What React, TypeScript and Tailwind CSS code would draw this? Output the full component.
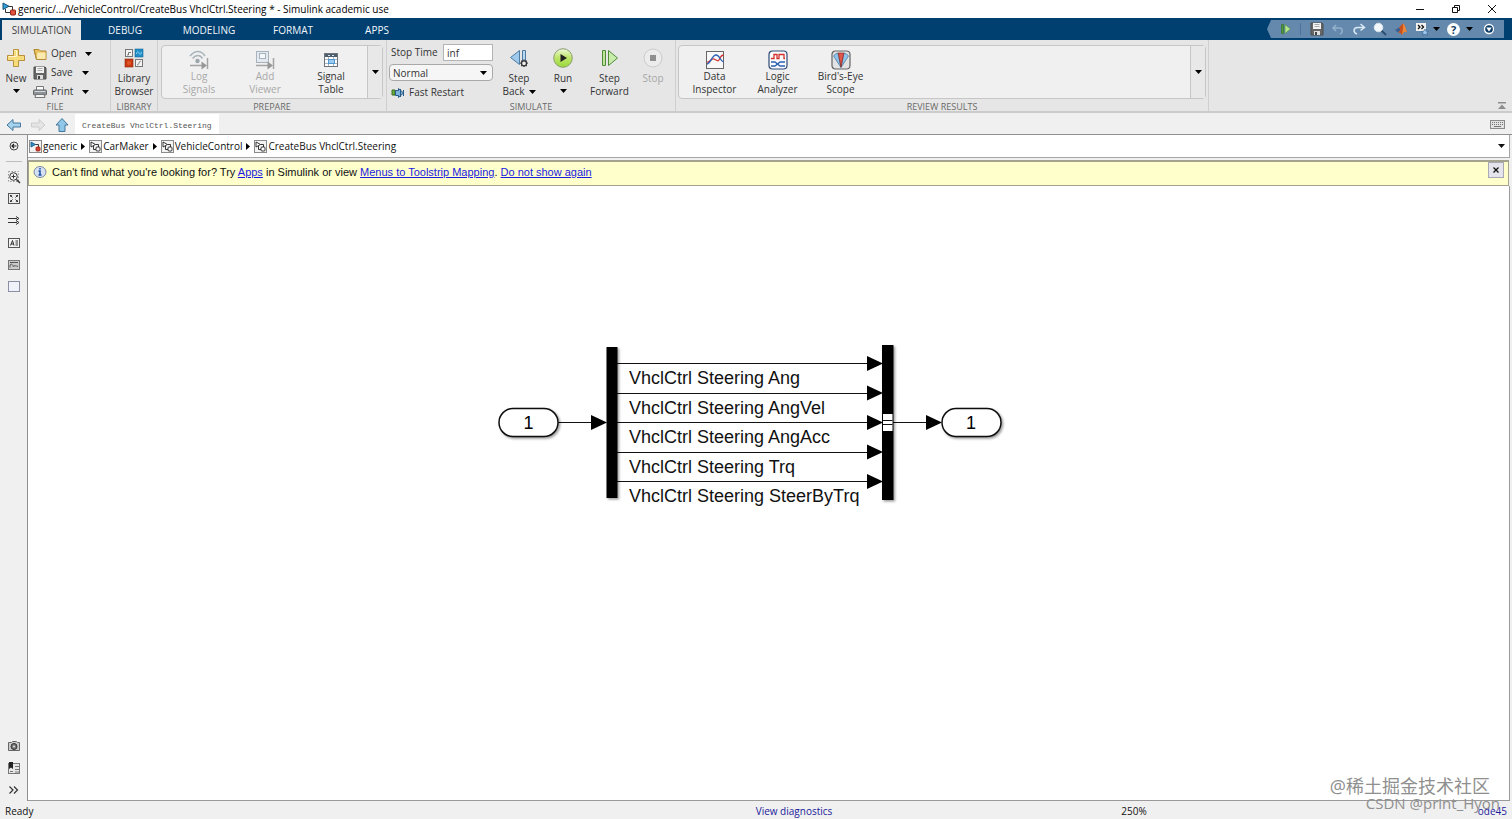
import type { ReactNode } from "react";

function Caret({ className = "" }: { className?: string }) {
  return (
    <svg viewBox="0 0 7 4" className={`h-[4px] w-[7px] shrink-0 ${className}`} fill="currentColor" aria-hidden>
      <path d="M0 0h7L3.5 4z" />
    </svg>
  );
}

function Icon({ size = 20, children }: { size?: number; children: ReactNode }) {
  return (
    <svg width={size} height={size} viewBox={`0 0 ${size} ${size}`} fill="none" className="shrink-0" aria-hidden>
      {children}
    </svg>
  );
}

/* ---------- toolstrip icons ---------- */

const NewIcon = () => (
  <Icon>
    <path d="M7.5 1.5h5v6h6v5h-6v6h-5v-6h-6v-5h6z" fill="#f6dc7a" stroke="#b8913a" />
    <path d="M8.5 2.5h2v6h-6M2.5 8.5h5" stroke="#fff6cf" />
  </Icon>
);

const OpenIcon = () => (
  <Icon size={14}>
    <path d="M1 2.5h5l1.5 1.5H13v8.5H3.5z" fill="#e9c15c" stroke="#b38a35" />
    <path d="M4.5 5.5h8v6.5h-9z" fill="#fbeab0" />
    <path d="M1 2.5l2.5 10" stroke="#b38a35" />
  </Icon>
);

const SaveIcon = () => (
  <Icon size={14}>
    <path d="M1 1h11l1 1v11H1z" fill="#666" stroke="#4c4c4c" />
    <rect x="3" y="1" width="8" height="6" fill="#f2f2f2" />
    <path d="M4.5 2.5h5M4.5 4.5h5" stroke="#aaa" />
    <rect x="4" y="9" width="6" height="4" fill="#ddd" />
    <rect x="5" y="10" width="2" height="3" fill="#444" />
  </Icon>
);

const PrintIcon = () => (
  <Icon size={14}>
    <path d="M3.5 5V1.5h7V5" fill="#fff" stroke="#777" />
    <rect x=".5" y="5" width="13" height="5" rx="1" fill="#8d9299" stroke="#666" />
    <path d="M1.5 6.5h11" stroke="#d5d8dc" />
    <path d="M3 9.5h8l1 3H2z" fill="#f3f3f3" stroke="#777" />
  </Icon>
);

const LibraryIcon = () => (
  <Icon>
    <rect x="1.5" y="1.5" width="7" height="7" fill="#f4f4f4" stroke="#777" />
    <path d="M3 7h1.5V4.5H7" stroke="#777" />
    <rect x="11" y="1" width="8" height="8" fill="#1f8fc9" stroke="#1a6a98" strokeWidth=".6" />
    <path d="M12.5 6c1-4 2-2 2.5-1s1.5 3 2.5-1" stroke="#8fd4f5" />
    <rect x="1" y="11" width="8" height="8" fill="#c93a12" stroke="#8d260a" strokeWidth=".6" />
    <circle cx="5" cy="15" r="2" fill="#e0562a" />
    <rect x="11.5" y="11.5" width="7" height="7" fill="#f4f4f4" stroke="#777" />
    <path d="M13 17c3 0 1-4 4-4" stroke="#888" />
  </Icon>
);

const LogSignalsIcon = () => (
  <Icon>
    <path d="M1 6c5-6 11-6 15 0M3.5 8.5c3.5-4 7.5-4 10 0" stroke="#a9b4bb" strokeWidth="1.5" />
    <circle cx="8.5" cy="11" r="2.2" fill="#9aa5ac" />
    <path d="M1 15.5h12M18.5 8v11" stroke="#a3a3a3" strokeWidth="1.5" />
    <path d="M12.5 11.5l5.5 4-5.5 4z" fill="#979797" />
  </Icon>
);

const AddViewerIcon = () => (
  <Icon>
    <rect x="1.5" y="1.5" width="12" height="11" fill="#e3e9ee" stroke="#a6b3bd" />
    <rect x="4.5" y="3.5" width="6" height="5" fill="#f4f8fb" stroke="#a6b3bd" />
    <path d="M1 15.5h12M18.5 8v11" stroke="#a3a3a3" strokeWidth="1.5" />
    <path d="M12.5 11.5l5.5 4-5.5 4z" fill="#979797" />
  </Icon>
);

const SignalTableIcon = () => (
  <Icon size={16}>
    <rect x="1.5" y="1.5" width="13" height="13" fill="#fff" stroke="#6d747b" />
    <rect x="2" y="2" width="12" height="3" fill="#4d5d6c" />
    <path d="M5 3.5h2M9 3.5h2" stroke="#dde5ec" />
    <path d="M2 7.5h12M2 11.5h12M5.5 5v9M10.5 5v9" stroke="#a5b3c0" />
    <rect x="5.5" y="7.5" width="6" height="4" fill="#9ccdf0" stroke="#4f95cf" />
  </Icon>
);

const FastRestartIcon = () => (
  <Icon size={14}>
    <path d="M1 4h3v5H1z" fill="#6fae3c" stroke="#3b6d20" />
    <path d="M4.5 4.5h3V2.5l5 4.5-5 4.5V9.5h-3z" fill="#7db3dc" stroke="#275a86" />
    <path d="M9.5 3v8M12.5 4v6" stroke="#275a86" />
  </Icon>
);

const StepBackIcon = () => (
  <Icon>
    <path d="M10.5 2.5v14L1.5 9.5z" fill="#9fc9ea" stroke="#4d7ba3" />
    <path d="M13.5 2.5h3v12h-3z" fill="#b9d9f1" stroke="#4d7ba3" />
    <path d="M15 11.5V19M11.2 15.2h7.6M12.3 12.6l5.4 5.4M12.3 18l5.4-5.4" stroke="#333" strokeWidth="1.3" />
    <circle cx="15" cy="15.3" r="2.5" fill="#eee" stroke="#333" strokeWidth="1.3" />
  </Icon>
);

const RunIcon = () => (
  <Icon>
    <defs>
      <linearGradient id="run-fill" x1="0" y1="0" x2="0" y2="1">
        <stop offset="0" stopColor="#f0f9dc" />
        <stop offset=".45" stopColor="#bfe66e" />
        <stop offset="1" stopColor="#9bd93a" />
      </linearGradient>
    </defs>
    <circle cx="10" cy="10" r="9.3" fill="url(#run-fill)" stroke="#8c9c74" />
    <path d="M7.5 6l6.5 4-6.5 4z" fill="#222" />
  </Icon>
);

const StepForwardIcon = () => (
  <Icon>
    <path d="M2.5 2.5h3v15h-3z" fill="#bfe39a" stroke="#4e8c3a" />
    <path d="M8.5 2.5v15L17.5 10z" fill="#c8ecaa" stroke="#4e8c3a" />
  </Icon>
);

const StopIcon = () => (
  <Icon>
    <circle cx="10" cy="10" r="9" fill="#ececec" stroke="#cbcbcb" />
    <rect x="7" y="7" width="6" height="6" fill="#8f8f8f" />
  </Icon>
);

const DataInspectorIcon = () => (
  <Icon>
    <rect x="1.5" y="1.5" width="17" height="17" fill="#f8f8f8" stroke="#666" />
    <path d="M2 12c3 1 4-4 7-3s4 4 6-1c1-2 2-3 3.5-3" stroke="#d2322d" strokeWidth="1.3" />
    <path d="M2 14c4-1 5-9 9-9 4 0 4 6 7.5 7" stroke="#2d62b5" strokeWidth="1.3" />
  </Icon>
);

const LogicAnalyzerIcon = () => (
  <Icon>
    <rect x="1" y="1" width="18" height="18" rx="3.5" fill="#fbfbfd" stroke="#2f4a78" strokeWidth="1.2" />
    <path d="M3 8.5h3v-4h3v4h2v-4h5v4h1" stroke="#d2322d" strokeWidth="1.3" />
    <path d="M3 12h4l5 4h5M3 16h4l5-4h5" stroke="#2d62b5" strokeWidth="1.3" />
  </Icon>
);

const BirdsEyeIcon = () => (
  <Icon>
    <rect x="1" y="1" width="18" height="18" rx="3.5" fill="#e3e3e3" stroke="#666" strokeWidth="1.2" />
    <path d="M10 17.5L2.5 6Q4 3.5 7 3z" fill="#8fc3e8" stroke="#3f719c" strokeWidth=".7" />
    <path d="M10 17.5L17.5 6Q16 3.5 13 3z" fill="#8fc3e8" stroke="#3f719c" strokeWidth=".7" />
    <path d="M10 17L7.2 3h5.6z" fill="#e2574c" stroke="#8c241d" strokeWidth=".7" />
  </Icon>
);

/* ---------- quick access icons ---------- */

const QuickStepIcon = () => (
  <Icon size={14}>
    <path d="M2.5 2.5h2v9h-2z" fill="#4f9b38" stroke="#2f6a25" strokeWidth=".6" />
    <path d="M6 2.5l5.5 4.5L6 11.5z" fill="#b4e690" stroke="#4e8c3a" strokeWidth=".6" />
  </Icon>
);

const UndoIcon = () => (
  <Icon size={14}>
    <path d="M5 3L2 6l3 3M2.5 6h6c3.5 0 3.5 5 .5 6" stroke="#93b1cc" strokeWidth="1.5" />
  </Icon>
);

const RedoIcon = () => (
  <Icon size={14}>
    <path d="M8.5 2l4 3.5-4 3M12 5.5H5.5C1 5.5 1 11 5 12" stroke="#dbe9f5" strokeWidth="1.5" />
  </Icon>
);

const SearchIcon = () => (
  <Icon size={14}>
    <path d="M8.5 8.5l4.5 4.5" stroke="#2e5070" strokeWidth="2" />
    <circle cx="5.5" cy="5.5" r="4.3" fill="#f2f7fb" stroke="#d9e3ec" />
  </Icon>
);

const MatlabIcon = () => (
  <Icon size={14}>
    <path d="M1 8l4-2.500 2 2L4 10.500z" fill="#3d5f92" />
    <path d="M5 5.500C7 4 8 1.500 9 1.500c1.500 0 3 6 4 9-2-1.500-3-.5-5 2.500-.8-1.500-2-2.500-4-2.500 2-1 3-3 1-5z" fill="#c8501f" />
    <path d="M9 1.500c.5 3-.5 8-1 11.500 2-3 3-4 5-2.500-1-3-2.500-9-4-9z" fill="#ec8a3c" />
  </Icon>
);

const ShortcutsIcon = () => (
  <Icon size={14}>
    <path d="M1 1h10v8H1z" fill="#f2f2f2" />
    <path d="M3 3l2 2-2 2M6.5 3l2 2-2 2" stroke="#111" strokeWidth="1.3" />
    <path d="M10 7l1.2 2.2 2.3.2-1.700 1.600.5 2.500-2.300-1.200L7.700 13.500l.5-2.500L6.500 9.400l2.300-.2z" fill="#9cc6ea" stroke="#2e5a8a" strokeWidth=".6" />
  </Icon>
);

const HelpIcon = () => (
  <span className="flex size-[13px] items-center justify-center rounded-full bg-white text-[11px] leading-none font-bold text-[#123a63]">
    ?
  </span>
);

const CollapseIcon = () => (
  <Icon size={12}>
    <circle cx="6" cy="6" r="4.5" fill="#0b3a66" stroke="#fff" strokeWidth="1.3" />
    <path d="M3.2 4.5h5.600L6 8.500z" fill="#fff" />
  </Icon>
);

/* ---------- model icons ---------- */

function ModelIcon({ root = false }: { root?: boolean }) {
  return (
    <Icon size={13}>
      <rect x=".5" y=".5" width="12" height="12" fill="#f3f3f3" stroke="#8a8a8a" />
      <path d="M2 2l4.5 2.5L2 7z" fill={root ? "#2b8fc7" : "#fff"} stroke={root ? "#1c5f88" : "#222"} strokeWidth=".9" />
      <path d="M6.5 4.5h3V7" stroke="#222" strokeWidth=".9" />
      <rect x="7" y="7" width="4" height="4" rx="1" fill={root ? "#d8412f" : "#fff"} stroke={root ? "#9c2518" : "#222"} strokeWidth=".9" />
      {!root && <path d="M7 9.5H4.5V6" stroke="#222" strokeWidth=".9" />}
    </Icon>
  );
}

const AppIcon = () => (
  <Icon size={14}>
    <path d="M1 1l6 3.2L1 7.5z" fill="#2fa3d8" stroke="#174f77" />
    <path d="M7 4.5h3.5V8M3.5 7v3.5H8" stroke="#333" />
    <rect x="8.5" y="8" width="5" height="5" rx="1" fill="#e2533b" stroke="#8f2417" />
  </Icon>
);

/* ---------- building blocks ---------- */

function Section({ label, width, children }: { label: string; width: string; children: ReactNode }) {
  return (
    <section className={`flex shrink-0 flex-col border-r border-[#cfcfcf] pt-1 ${width}`} aria-label={label}>
      <div className="flex h-[57px] w-full shrink-0">{children}</div>
      <div className="shrink-0 text-center text-[9px] leading-3 text-[#6a6a6a]">{label}</div>
    </section>
  );
}

type ToolProps = {
  icon: ReactNode;
  lines: string[];
  width: string;
  caret?: boolean;
  disabled?: boolean;
  compact?: boolean;
};

function Tool({ icon, lines, width, caret, disabled, compact }: ToolProps) {
  return (
    <button
      type="button"
      disabled={disabled}
      className={`flex shrink-0 flex-col items-center text-[10px] leading-[13px] text-[#333] disabled:text-[#a8a8a8] ${width}`}
    >
      <span className={compact ? "flex h-5 items-center" : "mb-[3px] flex h-[22px] items-center"}>{icon}</span>
      {lines.map((line, i) => (
        <span key={line} className="flex items-center gap-1 whitespace-nowrap">
          {line}
          {caret && lines.length > 1 && i === lines.length - 1 && <Caret className="text-black" />}
        </span>
      ))}
      {caret && lines.length === 1 && <Caret className="mt-1 text-black" />}
    </button>
  );
}

function FileRow({ icon, label, labelWidth = "w-[49px]" }: { icon: ReactNode; label: string; labelWidth?: string }) {
  return (
    <div className="flex h-[19px] items-center text-[10px] text-[#333]">
      <button type="button" className={`flex items-center gap-1 ${labelWidth}`}>
        {icon}
        {label}
      </button>
      <button type="button" aria-label={`${label} options`} className="text-black">
        <Caret />
      </button>
    </div>
  );
}

function Gallery({ width, children }: { width: string; children: ReactNode }) {
  return (
    <div className={`mt-px flex h-[54px] rounded-sm border border-[#c6c6c6] bg-[#f0f0f0] ${width}`}>
      <div className="flex flex-1 items-start pt-1 pl-1">{children}</div>
      <button
        type="button"
        aria-label="Show more"
        className="flex w-[15px] items-center justify-center border-l border-[#c6c6c6] bg-[#e8e8e8]"
      >
        <Caret />
      </button>
    </div>
  );
}

function TitleBar() {
  return (
    <header className="flex h-[18px] items-center bg-white pl-[2px] text-[10px] text-black">
      <AppIcon />
      <h1 className="ml-[2px] flex-1 whitespace-nowrap">
        generic/.../VehicleControl/CreateBus VhclCtrl.Steering * - Simulink academic use
      </h1>
      <button type="button" aria-label="Minimize" className="flex w-9 justify-center">
        <Icon size={10}><path d="M1 5.5h8" stroke="#111" /></Icon>
      </button>
      <button type="button" aria-label="Restore" className="flex w-9 justify-center">
        <Icon size={10}>
          <path d="M1.5 3.5h5v5h-5zM3.5 3V1.5h5v5H7" stroke="#111" />
        </Icon>
      </button>
      <button type="button" aria-label="Close" className="mr-[2px] flex w-9 justify-center">
        <Icon size={10}><path d="M1 1l8 8M9 1L1 9" stroke="#111" /></Icon>
      </button>
    </header>
  );
}

function QuickAccess() {
  const btn = "flex w-[21px] justify-center";
  return (
    <div className="mr-2 flex h-[18px] items-center">
      <svg viewBox="0 0 5 18" className="h-[18px] w-[5px]" aria-hidden>
        <path d="M5 0v18H4L0 9 4 0z" fill="#6489ad" />
      </svg>
      <div className="flex h-full items-center bg-[#6489ad] pr-[3px] text-black">
        <button type="button" aria-label="Step forward" className="flex w-7 justify-center"><QuickStepIcon /></button>
        <span className="mr-[5px] h-3 w-px bg-[#4b739b]" />
        <button type="button" aria-label="Save" className={btn}><SaveIcon /></button>
        <button type="button" aria-label="Undo" className={btn}><UndoIcon /></button>
        <button type="button" aria-label="Redo" className={btn}><RedoIcon /></button>
        <button type="button" aria-label="Search" className={btn}><SearchIcon /></button>
        <button type="button" aria-label="MATLAB" className={btn}><MatlabIcon /></button>
        <button type="button" aria-label="Shortcuts" className="flex w-8 items-center justify-center gap-1">
          <ShortcutsIcon />
          <Caret />
        </button>
        <button type="button" aria-label="Help" className="flex w-[34px] items-center justify-center gap-[6px]">
          <HelpIcon />
          <Caret />
        </button>
        <button type="button" aria-label="Customize" className="flex w-6 justify-center"><CollapseIcon /></button>
      </div>
    </div>
  );
}

function TabStrip() {
  return (
    <div className="flex h-[22px] items-end justify-between bg-[#004071] text-[10px]">
      <nav className="flex h-5 pl-[2px]">
        <button type="button" className="mr-[2px] w-[79px] bg-[#e8e8e8] text-[#444]">SIMULATION</button>
        {["DEBUG", "MODELING", "FORMAT", "APPS"].map((tab) => (
          <button key={tab} type="button" className="w-[84px] font-medium text-[#f2f6fa]">
            {tab}
          </button>
        ))}
      </nav>
      <div className="flex h-full items-center">
        <QuickAccess />
      </div>
    </div>
  );
}

function Toolstrip() {
  return (
    <div className="flex h-[73px] border-b-2 border-[#cbcbcb] bg-[#e6e6e6]">
      <Section label="FILE" width="w-[111px]">
        <Tool icon={<NewIcon />} lines={["New"]} width="w-8 pt-[3px]" caret />
        <div className="ml-px flex flex-col">
          <FileRow icon={<OpenIcon />} label="Open" labelWidth="w-[52px]" />
          <FileRow icon={<SaveIcon />} label="Save" />
          <FileRow icon={<PrintIcon />} label="Print" />
        </div>
      </Section>
      <Section label="LIBRARY" width="w-[47px]">
        <Tool icon={<LibraryIcon />} lines={["Library", "Browser"]} width="w-[46px] pt-[3px]" />
      </Section>
      <Section label="PREPARE" width="w-[229px]">
        <Gallery width="ml-[3px] w-[222px]">
          <Tool icon={<LogSignalsIcon />} lines={["Log", "Signals"]} width="w-[66px]" disabled compact />
          <Tool icon={<AddViewerIcon />} lines={["Add", "Viewer"]} width="w-[66px]" disabled compact />
          <Tool icon={<SignalTableIcon />} lines={["Signal", "Table"]} width="w-[66px]" compact />
        </Gallery>
      </Section>
      <Section label="SIMULATE" width="w-[289px]">
        <div className="ml-[2px] flex w-[104px] flex-col gap-[3px] text-[10px] text-[#333]">
          <div className="flex h-[17px] items-center justify-between">
            <label htmlFor="stop-time" className="pl-[2px] whitespace-nowrap">Stop Time</label>
            <input
              id="stop-time"
              defaultValue="inf"
              className="h-[17px] w-[50px] border border-[#b4b4b4] bg-white px-[3px]"
            />
          </div>
          <div className="relative flex">
            <select
              aria-label="Simulation mode"
              className="h-[17px] w-full appearance-none rounded-sm border border-[#a9a9a9] bg-[#f6f6f6] px-[3px] leading-3"
            >
              <option>Normal</option>
            </select>
            <Caret className="pointer-events-none absolute top-[7px] right-[6px] text-black" />
          </div>
          <button type="button" className="flex h-[17px] items-center gap-1 pl-[2px] whitespace-nowrap">
            <FastRestartIcon />
            Fast Restart
          </button>
        </div>
        <Tool icon={<StepBackIcon />} lines={["Step", "Back"]} width="ml-1 w-[44px] pt-[3px]" caret />
        <Tool icon={<RunIcon />} lines={["Run"]} width="w-[44px] pt-[3px]" caret />
        <Tool icon={<StepForwardIcon />} lines={["Step", "Forward"]} width="w-[49px] pt-[3px]" />
        <Tool icon={<StopIcon />} lines={["Stop"]} width="w-[38px] pt-[3px]" disabled />
      </Section>
      <Section label="REVIEW RESULTS" width="w-[533px]">
        <Gallery width="ml-[2px] w-[528px]">
          <Tool icon={<DataInspectorIcon />} lines={["Data", "Inspector"]} width="w-[63px]" compact />
          <Tool icon={<LogicAnalyzerIcon />} lines={["Logic", "Analyzer"]} width="w-[63px]" compact />
          <Tool icon={<BirdsEyeIcon />} lines={["Bird's-Eye", "Scope"]} width="w-[63px]" compact />
        </Gallery>
      </Section>
      <div className="flex flex-1 items-end justify-end pr-1">
        <button type="button" aria-label="Minimize toolstrip">
          <Icon size={12}>
            <path d="M2 3h8v1.500H2zM6 5.500l4 4.500H2z" fill="#8d8d8d" />
          </Icon>
        </button>
      </div>
    </div>
  );
}

function DocumentBar() {
  return (
    <div className="flex h-[22px] items-end border-b border-[#8f8f8f] bg-[#f0f0f0] pl-[6px]">
      <button type="button" aria-label="Back" className="mb-px">
        <Icon size={16}>
          <path d="M7 2.5v3.5h7.5v4H7v3.5L1 8z" fill="#a5d3ee" stroke="#45779c" />
        </Icon>
      </button>
      <button type="button" aria-label="Forward" className="mb-px ml-2" disabled>
        <Icon size={16}>
          <path d="M9 2.5v3.5H1.5v4H9v3.5L15 8z" fill="#e4e4e4" stroke="#cdcdcd" />
        </Icon>
      </button>
      <button type="button" aria-label="Up to parent" className="mb-px ml-2">
        <Icon size={16}>
          <path d="M2 8l6-6.500L14 8h-3v6.500H5V8z" fill="#90c6e8" stroke="#45779c" />
        </Icon>
      </button>
      <button type="button" className="ml-[5px] h-5 bg-white px-[7px] pt-1 font-['Liberation_Mono','Noto_Sans_CJK_SC',monospace] text-[8px] text-[#555]">
        CreateBus VhclCtrl.Steering
      </button>
      <button type="button" aria-label="Keyboard shortcuts" className="mr-[7px] mb-[5px] ml-auto">
        <svg width="15" height="9" viewBox="0 0 15 9" fill="none" aria-hidden>
          <rect x=".5" y=".5" width="14" height="8" fill="#e2e2e2" stroke="#8b8b8b" />
          <path d="M2 2.5h11M2 4.5h11" stroke="#777" strokeDasharray="1 1" />
          <path d="M4 6.5h7" stroke="#777" />
        </svg>
      </button>
    </div>
  );
}

const railTop: { name: string; art: ReactNode }[] = [
  {
    name: "Zoom",
    art: (
      <>
        <rect x="1.5" y="1.5" width="10" height="10" stroke="#999" strokeDasharray="1.5 1.5" />
        <circle cx="6.5" cy="6.5" r="3.8" fill="#f4f4f4" stroke="#333" />
        <path d="M4.5 6.5h4M6.5 4.5v4" stroke="#333" />
        <path d="M9.5 9.5l3.5 3.5" stroke="#333" strokeWidth="1.5" />
      </>
    ),
  },
  {
    name: "Fit to view",
    art: (
      <>
        <rect x="1.5" y="1.5" width="11" height="10" fill="#eee" stroke="#555" />
        <path d="M3 5V3h2.5zM11 5V3H8.5zM3 8v2h2.5zM11 8v2H8.5z" fill="#333" />
        <path d="M3 3l2.5 2.5M11 3L8.5 5.5M3 10l2.5-2.5M11 10L8.5 7.5" stroke="#333" />
      </>
    ),
  },
  {
    name: "Sample time",
    art: <path d="M1 4.5h9M1 8.5h9M9 2.5l3 2-3 2M9 6.5l3 2-3 2" stroke="#333" />,
  },
  {
    name: "Annotation",
    art: (
      <>
        <rect x="1.5" y="2.5" width="11" height="9" fill="#f4f4f4" stroke="#555" />
        <path d="M3.5 9.5L5.5 4.5 7 9.5M4 8h3M8.5 5h2.5M8.5 7h2.5M8.5 9h2.5" stroke="#333" />
      </>
    ),
  },
  {
    name: "Image",
    art: (
      <>
        <rect x="1.5" y="2.5" width="11" height="9" fill="#ccc" stroke="#777" />
        <path d="M3 9.5V7c1.5-2 3 0 3 1.5 1-1 3-1 5 0M3 4.5h8" stroke="#555" />
      </>
    ),
  },
  { name: "Area", art: <rect x="1.5" y="1.5" width="11" height="10" fill="#eff1fb" stroke="#8b8fa5" /> },
];

const railBottom: { name: string; art: ReactNode }[] = [
  {
    name: "Screenshot",
    art: (
      <>
        <path d="M1.5 3.5h3l1-1h4l1 1h2v8h-11z" fill="#ccc" stroke="#666" />
        <circle cx="7" cy="7.5" r="3" fill="#777" stroke="#333" />
        <circle cx="7" cy="7.5" r="1" fill="#ddd" />
      </>
    ),
  },
  {
    name: "Model data",
    art: (
      <>
        <rect x="1.5" y="2.5" width="11" height="10" fill="#e8e8e8" stroke="#777" />
        <path d="M2 1h4v7L4 6.5 2 8z" fill="#222" />
        <path d="M8 5.5h4M8 8.5h4M3 10.5h3M8 11h4" stroke="#777" />
      </>
    ),
  },
  { name: "More", art: <path d="M2.5 3.5L6 7l-3.5 3.5M7 3.5L10.5 7 7 10.5" stroke="#333" strokeWidth="1.2" /> },
];

function Rail() {
  return (
    <aside className="flex w-[27px] shrink-0 flex-col items-center justify-between bg-[#f0f0f0] pt-1 pb-1">
      <div className="flex flex-col items-center gap-2">
        <button type="button" aria-label="Hide browser">
          <Icon size={14}>
            <circle cx="7" cy="7" r="4" stroke="#444" />
            <path d="M9.5 7H5M7 5L5 7l2 2" stroke="#222" strokeWidth="1.2" />
          </Icon>
        </button>
        <span className="h-px w-4 bg-[#bdbdbd]" />
        {railTop.map(({ name, art }) => (
          <button key={name} type="button" aria-label={name}>
            <Icon size={14}>{art}</Icon>
          </button>
        ))}
      </div>
      <div className="flex flex-col items-center gap-2">
        {railBottom.map(({ name, art }) => (
          <button key={name} type="button" aria-label={name}>
            <Icon size={14}>{art}</Icon>
          </button>
        ))}
      </div>
    </aside>
  );
}

const path = ["generic", "CarMaker", "VehicleControl", "CreateBus VhclCtrl.Steering"];

function Breadcrumb() {
  return (
    <nav className="flex h-[23px] items-center border-r border-b border-[#a5a5a5] bg-white pl-px text-[10px] text-[#111]">
      {path.map((part, i) => (
        <span key={part} className="flex items-center">
          {i > 0 && (
            <svg viewBox="0 0 4 7" className="mx-1 h-[7px] w-1" aria-hidden>
              <path d="M0 0v7l4-3.500z" fill="#000" />
            </svg>
          )}
          <button type="button" className="flex items-center gap-px whitespace-nowrap">
            <ModelIcon root={i === 0} />
            {part}
          </button>
        </span>
      ))}
      <button type="button" aria-label="Path history" className="mr-1 ml-auto">
        <Caret />
      </button>
    </nav>
  );
}

function Notice() {
  const link = "text-[#1a1ae0] underline";
  return (
    <div className="mt-[2px] mr-px flex h-[26px] items-start border border-t-2 border-[#a3a38f] bg-[#ffffcc] font-['Liberation_Sans',Arial,sans-serif] text-[11px] text-[#111]">
      <span className="mt-[2px] ml-1 flex h-4 items-center">
        <Icon size={14}>
          <ellipse cx="7" cy="7" rx="6" ry="5.5" fill="#d5e1f2" stroke="#7d8ba3" />
          <path d="M7 3v1.5M5.5 6H7v4M5.5 10h3" stroke="#1d4da5" strokeWidth="1.5" />
        </Icon>
      </span>
      <p className="mt-[2px] ml-[5px] leading-4 whitespace-nowrap">
        Can't find what you're looking for? Try <a href="#apps" className={link}>Apps</a> in Simulink or view{" "}
        <a href="#mapping" className={link}>Menus to Toolstrip Mapping</a>.{" "}
        <a href="#dismiss" className={link}>Do not show again</a>
      </p>
      <button
        type="button"
        aria-label="Close notice"
        className="mr-1 ml-auto flex size-4 items-center justify-center border border-[#a9a9b5] bg-[#e4e4ec]"
      >
        <Icon size={6}><path d="M.5.5l5 5M5.5.5l-5 5" stroke="#111" strokeWidth="1.3" /></Icon>
      </button>
    </div>
  );
}

const signals = ["Ang", "AngVel", "AngAcc", "Trq", "SteerByTrq"];

function Diagram() {
  return (
    <svg
      width="520"
      height="170"
      viewBox="0 0 520 170"
      className="absolute top-[154px] left-[462px] font-['Liberation_Sans',Arial,sans-serif] text-[18px]"
    >
      <defs>
        <filter id="block-shadow" x="-20%" y="-20%" width="150%" height="150%">
          <feDropShadow dx="1.5" dy="1.5" stdDeviation="1" floodOpacity=".4" />
        </filter>
      </defs>

      <g stroke="#111" strokeWidth="1">
        <path d="M68 82.5h34M403 82.5h34" />
        {signals.map((name, i) => (
          <path key={name} d={`M127 ${Math.round(23 + i * 29.5) + 0.5}h252`} />
        ))}
      </g>
      <path d="M101 75v15l16-7.500zM436 75v15l16-7.500z" />
      {signals.map((name, i) => (
        <g key={name}>
          <path d={`M377 ${16 + i * 29.5}v15l16-7.500z`} />
          <text x="139" y={Math.round(44 + i * 29.5)} fill="#111">VhclCtrl Steering {name}</text>
        </g>
      ))}

      <g filter="url(#block-shadow)">
        <rect x="9" y="68.5" width="59" height="28" rx="14" fill="#fff" stroke="#111" strokeWidth="1.5" />
        <rect x="452" y="68.5" width="59" height="28" rx="14" fill="#fff" stroke="#111" strokeWidth="1.5" />
        <rect x="116.5" y="7" width="11" height="151" />
        <rect x="392" y="5" width="11.5" height="155" />
      </g>
      <rect x="393" y="74" width="9.5" height="17" fill="#fff" />
      <path d="M393 80.5h9.5M393 84.5h9.5" stroke="#111" />
      <text x="38.5" y="88.5" textAnchor="middle">1</text>
      <text x="481" y="88.5" textAnchor="middle">1</text>
    </svg>
  );
}

export default function App() {
  return (
    <div className="relative flex h-screen flex-col overflow-hidden bg-[#f0f0f0] font-['Open_Sans','Noto_Sans_CJK_SC',sans-serif]">
      <TitleBar />
      <TabStrip />
      <Toolstrip />
      <DocumentBar />
      <div className="flex min-h-0 flex-1">
        <Rail />
        <main className="mr-[2px] flex min-w-0 flex-1 flex-col border-l border-[#8f8f8f]">
          <Breadcrumb />
          <Notice />
          <div className="relative flex-1 overflow-hidden border-r border-b border-[#9a9a9a] bg-white">
            <Diagram />
          </div>
        </main>
      </div>
      <footer className="grid h-[18px] shrink-0 grid-cols-3 items-center px-[5px] pt-[2px] text-[10px] text-[#111]">
        <span>Ready</span>
        <a href="#diagnostics" className="ml-[76px] justify-self-center text-[#1b1b9c]">View diagnostics</a>
        <span className="flex justify-between pl-[115px]">
          <span>250%</span>
          <a href="#solver" className="text-[#1b1b9c]">ode45</a>
        </span>
      </footer>
      <div className="pointer-events-none absolute right-3 bottom-2 text-right text-[#8f8f8f]">
        <p className="mr-[10px] text-[18px] leading-[18px]">@稀土掘金技术社区</p>
        <p className="text-[15px] leading-4">CSDN @print_Hyon</p>
      </div>
    </div>
  );
}
